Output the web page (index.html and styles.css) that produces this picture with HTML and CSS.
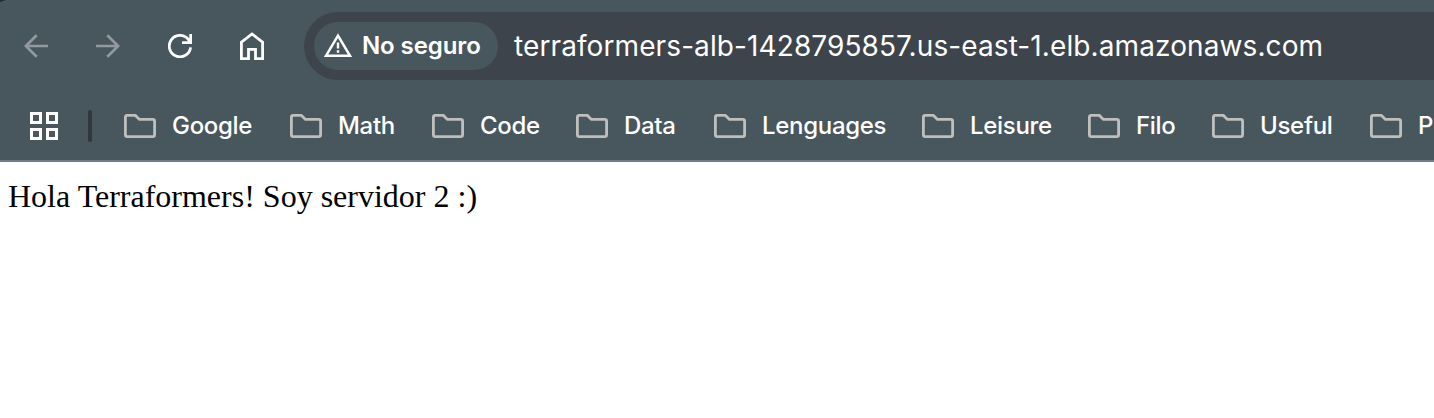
FILE: index.html
```html
<!DOCTYPE html>
<html lang="es">
<head>
<meta charset="utf-8">
<title>Terraformers</title>
<link rel="stylesheet" href="styles.css">
</head>
<body>
<svg class="defs" width="0" height="0" aria-hidden="true">
  <symbol id="folder" viewBox="0 0 32 24"><path d="M3.2 1.4H11.4L15.4 5.4H28.8Q30.6 5.4 30.6 7.2V20.8Q30.6 22.6 28.8 22.6H3.2Q1.4 22.6 1.4 20.8V3.2Q1.4 1.4 3.2 1.4Z" fill="none" stroke="#bfbfbd" stroke-width="2.8"/></symbol>
</svg>
<header class="chrome">
  <div class="toolbar">
    <nav class="nav">
      <svg class="icon dim" viewBox="0 0 24 24"><path d="M24 12H2M12.7 1.2L1.8 12L12.7 22.8"/></svg>
      <svg class="icon dim" viewBox="0 0 24 24"><path d="M0 12H22M11.3 1.2L22.2 12L11.3 22.8"/></svg>
      <svg class="icon" viewBox="0 0 24 24"><path d="M22.6 13.3A10.7 10.7 0 1 1 20.5 5.6L22.3 8.2M14 8.7H22.7V0"/></svg>
      <svg class="icon home" viewBox="0 0 24 28"><path d="M1.4 26.6V10.2L12 2L22.6 10.2V26.6H15.5V17.4H8.5V26.6Z"/></svg>
    </nav>
    <div class="omnibox">
      <div class="chip">
        <svg class="warning" viewBox="0 0 28 24"><path d="M14 2.6L25.9 22.7H2.1Z" fill="none" stroke="#fff" stroke-width="2.5"/><path d="M12.8 9.5H15.2V15.5H12.8ZM12.8 17.3H15.2V19.7H12.8Z" fill="#fff"/></svg>
        <span class="chip-label">No seguro</span>
      </div>
      <span class="url">terraformers-alb-1428795857.us-east-1.elb.amazonaws.com</span>
    </div>
  </div>
  <div class="bookmarks">
    <svg class="apps" viewBox="0 0 28 28"><path d="M1.5 1.5H10.5V10.5H1.5ZM17.5 1.5H26.5V10.5H17.5ZM1.5 17.5H10.5V26.5H1.5ZM17.5 17.5H26.5V26.5H17.5Z"/></svg>
    <span class="divider"></span>
    <div class="bookmark google"><svg class="folder"><use href="#folder"/></svg><span class="label">Google</span></div>
    <div class="bookmark math"><svg class="folder"><use href="#folder"/></svg><span class="label">Math</span></div>
    <div class="bookmark code"><svg class="folder"><use href="#folder"/></svg><span class="label">Code</span></div>
    <div class="bookmark data"><svg class="folder"><use href="#folder"/></svg><span class="label">Data</span></div>
    <div class="bookmark lenguages"><svg class="folder"><use href="#folder"/></svg><span class="label">Lenguages</span></div>
    <div class="bookmark leisure"><svg class="folder"><use href="#folder"/></svg><span class="label">Leisure</span></div>
    <div class="bookmark filo"><svg class="folder"><use href="#folder"/></svg><span class="label">Filo</span></div>
    <div class="bookmark useful"><svg class="folder"><use href="#folder"/></svg><span class="label">Useful</span></div>
    <div class="bookmark"><svg class="folder"><use href="#folder"/></svg><span class="label">P</span></div>
  </div>
</header>
<main class="page">Hola Terraformers! Soy servidor 2 :)</main>
</body>
</html>
```
FILE: styles.css
```css
* { box-sizing: border-box; }
body { margin: 0; background: #fff; overflow: hidden; height: 418px; }
.defs { display: block; }
.chrome {
  height: 162px;
  background: linear-gradient(160deg, #252c31 1.5px, transparent 2.5px) 0 0 / 6px 3px no-repeat, #48565e;
  border-bottom: 2px solid #737d83;
  color: #fff;
  font-family: Inter, sans-serif;
  overflow: hidden;
}
.toolbar { display: flex; height: 92px; padding-top: 12px; }
.nav { display: flex; align-items: center; gap: 48px; height: 68px; padding-left: 24px; margin-right: 40px; flex: none; }
.icon { width: 24px; height: 24px; fill: none; stroke: #fff; stroke-width: 2.8; }
.icon.dim { stroke: #929a9f; stroke-width: 2.7; }
.icon.home { height: 28px; }
.omnibox {
  flex: 1;
  display: flex;
  align-items: center;
  height: 68px;
  padding-left: 10px;
  border-radius: 34px 0 0 34px;
  background: #3d444b;
  white-space: nowrap;
}
.chip {
  display: flex;
  align-items: center;
  flex: none;
  width: 184px;
  height: 48px;
  padding-left: 10px;
  margin-right: 16px;
  border-radius: 24px;
  background: #48565e;
}
.warning { width: 28px; height: 24px; margin: 0 10px 2px 0; }
.chip-label { padding-bottom: 2px; font-size: 24px; font-weight: 600; letter-spacing: -0.1px; }
.url { font-size: 28px; letter-spacing: 0.1px; }
.bookmarks { display: flex; align-items: center; height: 68px; padding-left: 30px; white-space: nowrap; }
.apps { flex: none; width: 28px; height: 28px; fill: none; stroke: #fff; stroke-width: 3; }
.divider { flex: none; width: 4px; height: 32px; margin: 0 32px 0 30px; border-radius: 2px; background: #30383e; }
.bookmark { display: flex; align-items: center; gap: 16px; flex: none; font-size: 24px; font-weight: 500; letter-spacing: -0.3px; }
.label { padding-bottom: 2px; }
.folder { flex: none; width: 32px; height: 24px; }
.google, .leisure { width: 166px; }
.math { width: 142px; }
.code { width: 144px; }
.data { width: 138px; }
.lenguages { width: 208px; }
.filo { width: 124px; }
.useful { width: 158px; }
.page { padding: 16px 8px; font: 32px/37px "Liberation Serif", serif; color: #000; }
```
